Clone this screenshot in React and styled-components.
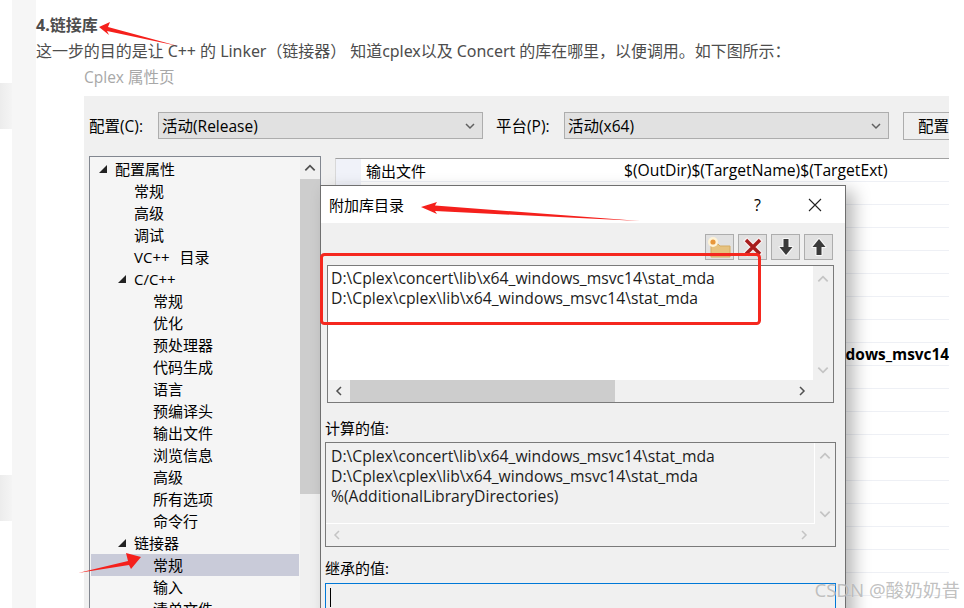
import React from 'react'
import styled, { createGlobalStyle } from 'styled-components'

const UI_FONT = `"Open Sans", "Noto Sans CJK SC", sans-serif`

const GlobalStyle = createGlobalStyle`
  html, body { margin: 0; padding: 0; background: #fff; }
  * { box-sizing: border-box; }
`

const Page = styled.div`
  position: relative;
  width: 964px;
  height: 608px;
  overflow: hidden;
  display: flex;
  background: #fff;
  font-family: "Noto Sans", "Noto Sans CJK SC", sans-serif;
`

const Gutter = styled.div`
  width: 36px;
  flex: none;
  display: flex;
  background: #fff;
`

const GutterEdge = styled.div`
  width: 12px;
  padding-top: 83px;
  display: flex;
  flex-direction: column;
  gap: 346px;
`

const GutterBlock = styled.div`
  height: 46px;
  background: linear-gradient(90deg, #ececec, #f4f4f4);
`

const GutterBand = styled.div`
  width: 24px;
  background: #f6f6f6;
`

const Article = styled.main`
  width: 913px;
  flex: none;
`

const Heading = styled.h4`
  margin: 14px 0 0;
  font-size: 16px;
  line-height: 22px;
  font-weight: 700;
  color: #4d4d4d;
`

const Paragraph = styled.p`
  margin: 3px 0 0;
  font-size: 16px;
  line-height: 24px;
  letter-spacing: -0.05px;
  color: #4d4d4d;
  white-space: nowrap;
`

const Figure = styled.div`
  margin: 3px 0 0 48px;
  width: 865px;
`

const WindowTitle = styled.div`
  height: 22px;
  font-size: 15.5px;
  line-height: 22px;
  color: #a8a8a8;
  font-family: ${UI_FONT};
`

const Window = styled.div`
  position: relative;
  margin-top: 8px;
  height: 520px;
  background: #f0f0f0;
  color: #000;
  font-family: ${UI_FONT};
  font-size: 15px;
  overflow: hidden;
`

const ConfigBar = styled.div`
  display: flex;
  align-items: center;
  height: 27px;
  margin: 16px 0 17px;
  padding-left: 5px;
  font-size: 15.5px;
`

const ConfigLabel = styled.span`
  width: ${p => p.$width}px;
  flex: none;
  white-space: nowrap;
`

const Select = styled.div`
  width: 325px;
  height: 27px;
  flex: none;
  margin-right: ${p => p.$gap}px;
  padding: 0 6px 0 3px;
  display: flex;
  align-items: center;
  justify-content: space-between;
  background: #e1e1e1;
  border: 1px solid #adadad;
`

const ConfigButton = styled.div`
  width: 80px;
  height: 28px;
  flex: none;
  padding-left: 14px;
  display: flex;
  align-items: center;
  white-space: nowrap;
  background: #efefef;
  border: 1px solid #adadad;
`

const Split = styled.div`
  display: flex;
  gap: 14px;
  padding-left: 5px;
`

const Tree = styled.div`
  width: 232px;
  height: 470px;
  flex: none;
  display: flex;
  background: #f5f5f5;
  border: 1px solid #828790;
`

const TreeRows = styled.div`
  width: 208px;
  flex: none;
  padding-top: 1px;
  margin: 0 1px;
`

const TreeRow = styled.div`
  height: 22px;
  display: flex;
  align-items: center;
  gap: 9px;
  padding-left: ${p => p.$level * 19 + 24}px;
  background: ${p => (p.$selected ? '#c9cbd9' : 'transparent')};
  white-space: nowrap;
  word-spacing: 6px;
  line-height: 22px;
`

const TreeTriangle = styled.svg`
  width: 8px;
  height: 8px;
  flex: none;
  margin-left: -16px;
  margin-right: -1px;
`

const TreeScroll = styled.div`
  width: 20px;
  flex: none;
  display: flex;
  flex-direction: column;
  align-items: center;
  background: #f0f0f0;
`

const TreeScrollArrow = styled.div`
  height: 22px;
  display: flex;
  align-items: center;
`

const TreeThumb = styled.div`
  align-self: stretch;
  height: 315px;
  background: #cdcdcd;
`

const PropGrid = styled.div`
  flex: 1;
  margin-top: 2px;
  height: 470px;
  background: #fff;
  border-top: 1px solid #a0a0a0;
  border-left: 1px solid #d8d8d8;
`

const PropRow = styled.div`
  height: 23px;
  display: flex;
  align-items: center;
  border-bottom: 1px solid #eef0f5;
  white-space: nowrap;
`

const PropStrip = styled.div`
  width: 25px;
  height: 100%;
  flex: none;
  background: #f0f2f9;
`

const PropName = styled.div`
  width: 263px;
  flex: none;
  padding-left: 5px;
`

const PropValue = styled.div`
  font-size: ${p => (p.$bold ? 15.4 : 15.7)}px;
  font-weight: ${p => (p.$bold ? 700 : 400)};
`

/* dialog sits on top of the property window */
const Dialog = styled.div`
  position: absolute;
  left: 236px;
  top: 89px;
  width: 526px;
  height: 440px;
  background: #f0f0f0;
  border: 1px solid #6f6f6f;
  box-shadow: 8px 6px 16px rgba(0, 0, 0, 0.28);
`

const DialogTitle = styled.div`
  height: 37px;
  display: flex;
  align-items: center;
  padding-left: 8px;
  background: #fff;
`

const DialogTitleText = styled.span`
  flex: 1;
  font-size: 15px;
`

const DialogHelp = styled.span`
  width: 54px;
  font-size: 16px;
`

const DialogClose = styled.svg`
  width: 14px;
  height: 14px;
  margin-right: 23px;
`

const DialogBody = styled.div`
  padding: 11px 9px 0 4px;
`

const IconBar = styled.div`
  display: flex;
  justify-content: flex-end;
  gap: 4px;
  margin-right: 3px;
`

const IconButton = styled.div`
  width: 29px;
  height: 26px;
  display: flex;
  align-items: center;
  justify-content: center;
  background: #e1e1e1;
  border: 1px solid #adadad;
`

const ScrollBox = styled.div`
  display: grid;
  grid-template-columns: 1fr 20px;
  grid-template-rows: 1fr 22px;
  height: ${p => p.$height}px;
  margin: ${p => p.$inset || '0'};
  border: 1px solid #7a7a7a;
  background: #f0f0f0;
`

const BoxText = styled.div`
  padding: ${p => p.$top}px 0 0 ${p => p.$left}px;
  background: ${p => (p.$white ? '#fff' : 'transparent')};
  border-right: 1px solid #fff;
  border-bottom: 1px solid #fff;
  font-size: 15.7px;
  line-height: 20px;
  white-space: nowrap;
  color: #1c1c1c;
  overflow: hidden;
`

const VBar = styled.div`
  display: flex;
  flex-direction: column;
  align-items: center;
  justify-content: space-between;
  padding: 6px 0 3px;
`

const HBar = styled.div`
  display: flex;
  align-items: center;
`

const HArrow = styled.div`
  width: 22px;
  flex: none;
  display: flex;
  justify-content: center;
`

const HThumb = styled.div`
  width: ${p => p.$width}px;
  height: 100%;
  background: #cdcdcd;
`

const HRest = styled.div`
  flex: 1;
`

const FieldLabel = styled.div`
  margin-top: ${p => p.$top}px;
  height: 20px;
  line-height: 20px;
  font-size: 15px;
`

const InheritedBox = styled.div`
  height: 40px;
  margin-top: 5px;
  padding: 4px 0 0 4px;
  border: 1px solid #0078d7;
  background: #f0f0f0;
`

const Caret = styled.div`
  width: 1px;
  height: 19px;
  background: #000;
`

const Annotations = styled.svg`
  position: absolute;
  left: 0;
  top: 0;
  width: 964px;
  height: 608px;
  pointer-events: none;
`

const Watermark = styled.div`
  position: absolute;
  right: 4px;
  top: 579px;
  font-size: 18.6px;
  line-height: 22px;
  color: rgba(140, 140, 140, 0.55);
  text-shadow: 0 0 1px rgba(255, 255, 255, 0.8);
  white-space: nowrap;
`

const treeItems = [
  { label: '配置属性', level: 0, open: true },
  { label: '常规', level: 1 },
  { label: '高级', level: 1 },
  { label: '调试', level: 1 },
  { label: 'VC++ 目录', level: 1 },
  { label: 'C/C++', level: 1, open: true },
  { label: '常规', level: 2 },
  { label: '优化', level: 2 },
  { label: '预处理器', level: 2 },
  { label: '代码生成', level: 2 },
  { label: '语言', level: 2 },
  { label: '预编译头', level: 2 },
  { label: '输出文件', level: 2 },
  { label: '浏览信息', level: 2 },
  { label: '高级', level: 2 },
  { label: '所有选项', level: 2 },
  { label: '命令行', level: 2 },
  { label: '链接器', level: 1, open: true },
  { label: '常规', level: 2, selected: true },
  { label: '输入', level: 2 },
  { label: '清单文件', level: 2 },
]

const propRows = Array.from({ length: 20 }, (_, i) => {
  if (i === 0) return { name: '输出文件', value: '$(OutDir)$(TargetName)$(TargetExt)' }
  if (i === 8) return { value: 'D:\\Cplex\\concert\\lib\\x64_windows_msvc14', bold: true }
  return {}
})

const PATH_CONCERT = 'D:\\Cplex\\concert\\lib\\x64_windows_msvc14\\stat_mda'
const PATH_CPLEX = 'D:\\Cplex\\cplex\\lib\\x64_windows_msvc14\\stat_mda'

const Chevron = ({ dir = 'down', color = '#606060', size = 12 }) => {
  const points = {
    down: '2,4 6,8 10,4',
    up: '2,8 6,4 10,8',
    left: '8,2 4,6 8,10',
    right: '4,2 8,6 4,10',
  }
  return (
    <svg width={size} height={size} viewBox="0 0 12 12">
      <polyline points={points[dir]} fill="none" stroke={color} strokeWidth="1.5" />
    </svg>
  )
}

const FolderIcon = () => (
  <svg width="27" height="24" viewBox="0 0 27 24">
    <path d="M5 9h7l2 2h10v11H5z" fill="#e6c27f" stroke="#d5ab62" strokeWidth="1" />
    <circle cx="7" cy="7" r="5" fill="#fff3d6" />
    <circle cx="7" cy="7" r="2.6" fill="#e8973a" />
  </svg>
)

const DeleteIcon = () => (
  <svg width="22" height="22" viewBox="0 0 22 22">
    <path d="M3 3l16 16M19 3L3 19" stroke="#f6eeee" strokeWidth="6" />
    <path d="M4 4l14 14M18 4L4 18" stroke="#a81c1c" strokeWidth="3.4" />
  </svg>
)

const ArrowIcon = ({ up }) => (
  <svg width="20" height="22" viewBox="0 0 20 22" style={up ? { transform: 'scaleY(-1)' } : undefined}>
    <path d="M7.5 3h5v8h4l-6.5 8-6.5-8h4z" fill="#3a3a3a" stroke="#f8f8f8" strokeWidth="2.2" strokeLinejoin="round" paintOrder="stroke" />
  </svg>
)

const ScrollList = ({ height, inset, white, top, left, lines, active }) => (
  <ScrollBox $height={height} $inset={inset}>
    <BoxText $white={white} $top={top} $left={left}>
      {lines.map(line => (
        <div key={line}>{line}</div>
      ))}
    </BoxText>
    <VBar>
      <Chevron dir="up" color="#c4c4c4" size={14} />
      <Chevron dir="down" color="#c4c4c4" size={14} />
    </VBar>
    <HBar>
      <HArrow>
        <Chevron dir="left" color={active ? '#505050' : '#c4c4c4'} />
      </HArrow>
      {active && <HThumb $width={265} />}
      <HRest />
      <HArrow>
        <Chevron dir="right" color={active ? '#505050' : '#c4c4c4'} />
      </HArrow>
    </HBar>
  </ScrollBox>
)

const PropertyTree = () => (
  <Tree>
    <TreeRows>
      {treeItems.map((item, i) => (
        <TreeRow key={i} $level={item.level} $selected={item.selected}>
          {item.open && (
            <TreeTriangle viewBox="0 0 8 8">
              <polygon points="8,0 8,8 0,8" fill="#222" />
            </TreeTriangle>
          )}
          {item.label}
        </TreeRow>
      ))}
    </TreeRows>
    <TreeScroll>
      <TreeScrollArrow>
        <Chevron dir="up" color="#505050" size={14} />
      </TreeScrollArrow>
      <TreeThumb />
    </TreeScroll>
  </Tree>
)

const AdditionalDirsDialog = () => (
  <Dialog>
    <DialogTitle>
      <DialogTitleText>附加库目录</DialogTitleText>
      <DialogHelp>?</DialogHelp>
      <DialogClose viewBox="0 0 14 14">
        <path d="M1 1l12 12M13 1L1 13" stroke="#222" strokeWidth="1.1" fill="none" />
      </DialogClose>
    </DialogTitle>
    <DialogBody>
      <IconBar>
        <IconButton><FolderIcon /></IconButton>
        <IconButton><DeleteIcon /></IconButton>
        <IconButton><ArrowIcon /></IconButton>
        <IconButton><ArrowIcon up /></IconButton>
      </IconBar>
      <ScrollList
        height={138}
        inset="5px 2px 0 2px"
        white
        top={2}
        left={3}
        lines={[PATH_CONCERT, PATH_CPLEX]}
        active
      />
      <FieldLabel $top={15}>计算的值:</FieldLabel>
      <ScrollList
        height={105}
        inset="4px 0 0 0"
        top={3}
        left={5}
        lines={[PATH_CONCERT, PATH_CPLEX, '%(AdditionalLibraryDirectories)']}
      />
      <FieldLabel $top={11}>继承的值:</FieldLabel>
      <InheritedBox><Caret /></InheritedBox>
    </DialogBody>
  </Dialog>
)

export default function App() {
  return (
    <Page>
      <GlobalStyle />
      <Gutter>
        <GutterEdge>
          <GutterBlock />
          <GutterBlock />
        </GutterEdge>
        <GutterBand />
      </Gutter>
      <Article>
        <Heading>4.链接库</Heading>
        <Paragraph>这一步的目的是让 C++ 的 Linker（链接器） 知道cplex以及 Concert 的库在哪里，以便调用。如下图所示：</Paragraph>
        <Figure>
          <WindowTitle>Cplex 属性页</WindowTitle>
          <Window>
            <ConfigBar>
              <ConfigLabel $width={69}>配置(C):</ConfigLabel>
              <Select $gap={13}>活动(Release)<Chevron /></Select>
              <ConfigLabel $width={68}>平台(P):</ConfigLabel>
              <Select $gap={14}>活动(x64)<Chevron /></Select>
              <ConfigButton>配置管理器</ConfigButton>
            </ConfigBar>
            <Split>
              <PropertyTree />
              <PropGrid>
                {propRows.map((row, i) => (
                  <PropRow key={i}>
                    <PropStrip />
                    <PropName>{row.name}</PropName>
                    <PropValue $bold={row.bold}>{row.value}</PropValue>
                  </PropRow>
                ))}
              </PropGrid>
            </Split>
            <AdditionalDirsDialog />
          </Window>
        </Figure>
      </Article>
      <Annotations viewBox="0 0 964 608">
        <polygon points="99,27 110,22 108,27 178,46 107,31 109,35" fill="#f5201c" />
        <polygon points="421,207 437,202 435,205.5 640,221 435,211 437,214" fill="#f5201c" />
        <polygon points="141,557 126,553 128,561 78,573 129,565 131,569" fill="#f5201c" />
        <rect x="321.5" y="254.5" width="438" height="69" rx="3" fill="none" stroke="#f5281f" strokeWidth="3" />
      </Annotations>
      <Watermark>CSDN @酸奶奶昔</Watermark>
    </Page>
  )
}
